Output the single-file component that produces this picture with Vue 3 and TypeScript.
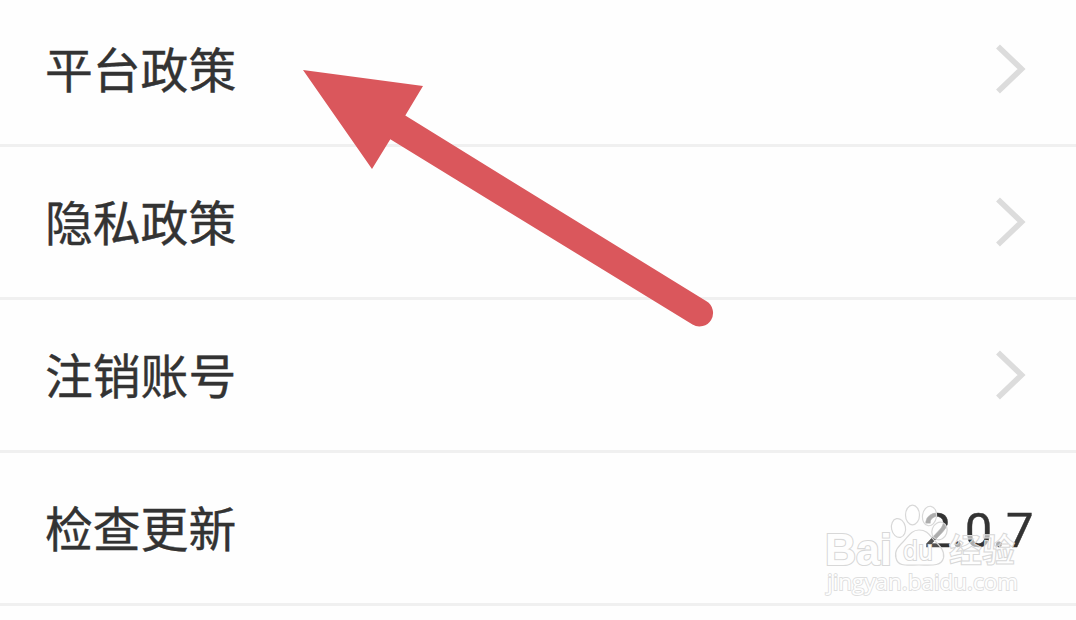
<script setup lang="ts">
interface SettingItem {
  label: string
  value?: string
}

const items: SettingItem[] = [
  { label: '平台政策' },
  { label: '隐私政策' },
  { label: '注销账号' },
  { label: '检查更新', value: '2.0.7' },
]
</script>

<template>
  <main class="page">
    <ul class="list">
      <li v-for="item in items" :key="item.label" class="row">
        <span class="label">{{ item.label }}</span>
        <span v-if="item.value" class="value">{{ item.value }}</span>
        <svg v-else class="chevron" width="34" height="54" viewBox="0 0 34 54">
          <path d="M5 4.500 L28.500 27 L5 49.500" />
        </svg>
      </li>
    </ul>

    <svg class="arrow" width="1076" height="620" viewBox="0 0 1076 620">
      <path d="M303 70 L423 86 L405.300 115.600 L706.500 301.300 A13.500 13.500 0 0 1 692.500 324.500 L390.300 139.300 L372 169 Z" />
    </svg>

    <svg class="watermark" width="210" height="110" viewBox="820 500 210 110">
      <g class="mark">
        <ellipse cx="898.500" cy="528" rx="7" ry="9.500" transform="rotate(-12 898.500 528)" />
        <ellipse cx="912.500" cy="515" rx="7" ry="9.800" />
        <ellipse cx="929.500" cy="516" rx="7" ry="9.800" transform="rotate(8 929.500 516)" />
        <ellipse cx="939.500" cy="531" rx="7.500" ry="9" transform="rotate(20 939.500 531)" />
        <path class="pad" d="M919 530 C911 530 908 537 903 542 C898 547 894 551 896 558 C898 567 907 565 919 565 C930 565 941 567 943.500 558 C945 551 940 546 935 541 C930 536 928 530 919 530 Z" />
        <text class="brand" x="825" y="565" textLength="67" lengthAdjust="spacingAndGlyphs">Bai</text>
        <text class="du" x="903" y="560" textLength="30" lengthAdjust="spacingAndGlyphs">du</text>
        <text class="cn" x="949" y="562">经验</text>
        <text class="site" x="827" y="590" textLength="191" lengthAdjust="spacingAndGlyphs">jingyan.baidu.com</text>
      </g>
    </svg>
  </main>
</template>

<style>
body {
  margin: 0;
  background: #fefefe;
}
</style>

<style scoped>
.page {
  position: relative;
  height: 620px;
  overflow: hidden;
  background: #fefefe;
  color: #333;
  font-family: "Noto Sans CJK SC", sans-serif;
}

.list {
  display: flow-root;
  margin: -6px 0 0;
  padding: 0;
  list-style: none;
}

.row {
  box-sizing: border-box;
  display: flex;
  align-items: center;
  justify-content: space-between;
  height: 153px;
  padding: 0 42px 0 45px;
  border-bottom: 3px solid #f0f0f0;
}

.label,
.value {
  font-size: 47.8px;
  line-height: 72px;
  padding-bottom: 3px;
  -webkit-text-stroke: 0.4px #333;
}

.value {
  font-family: Roboto, sans-serif;
  font-size: 49px;
  letter-spacing: 0.4px;
  padding: 6px 0 0;
}

.chevron {
  margin-right: 7px;
}

.chevron path {
  fill: none;
  stroke: #dcdcdc;
  stroke-width: 5.6;
}

.arrow {
  position: absolute;
  inset: 0;
  fill: #da575c;
  pointer-events: none;
}

.watermark {
  position: absolute;
  left: 820px;
  top: 500px;
  pointer-events: none;
}

.mark {
  fill: rgba(255, 255, 255, 0.6);
  stroke: #d8d8d8;
  stroke-width: 1.2;
}

.mark .pad {
  fill: rgba(255, 255, 255, 0.15);
}

.mark text {
  paint-order: stroke;
  stroke-width: 2.2;
  fill: #fefefe;
}

.mark .brand {
  font: 700 45px "Liberation Sans", sans-serif;
}

.mark .du {
  font: 400 27px "DejaVu Sans", sans-serif;
}

.mark .cn {
  font: 700 33px "Noto Sans CJK SC", sans-serif;
  paint-order: normal;
  stroke-width: 1;
  fill: rgba(255, 255, 255, 0.6);
}

.mark .site {
  font: 400 22px "Open Sans", sans-serif;
  stroke: #dedede;
  stroke-width: 1.8;
}
</style>
